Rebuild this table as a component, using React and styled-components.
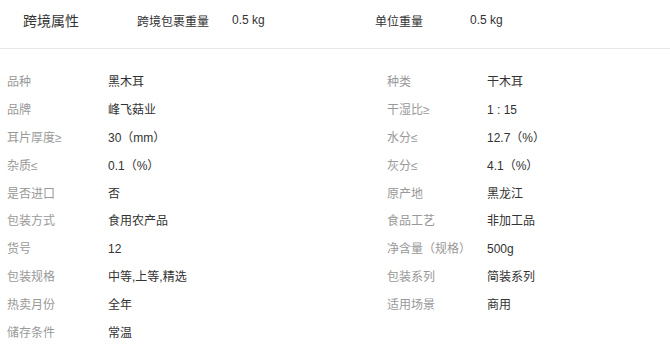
import React from "react";
import styled, { createGlobalStyle } from "styled-components";

const GlobalStyle = createGlobalStyle`
  body {
    margin: 0;
    background: #fff;
    font-family: "Liberation Sans", "Noto Sans CJK SC", sans-serif;
  }
`;

const header = [
  { label: "跨境包裹重量", value: "0.5 kg" },
  { label: "单位重量", value: "0.5 kg" },
];

const rows = [
  ["品种", "黑木耳", "种类", "干木耳"],
  ["品牌", "峰飞菇业", "干湿比≥", "1 : 15"],
  ["耳片厚度≥", "30（mm）", "水分≤", "12.7（%）"],
  ["杂质≤", "0.1（%）", "灰分≤", "4.1（%）"],
  ["是否进口", "否", "原产地", "黑龙江"],
  ["包装方式", "食用农产品", "食品工艺", "非加工品"],
  ["货号", "12", "净含量（规格）", "500g"],
  ["包装规格", "中等,上等,精选", "包装系列", "简装系列"],
  ["热卖月份", "全年", "适用场景", "商用"],
  ["储存条件", "常温"],
];

const Page = styled.div`
  width: 670px;
  height: 346px;
  overflow: hidden;
`;

const Header = styled.div`
  box-sizing: border-box;
  display: flex;
  align-items: center;
  height: 49px;
  padding: 0 0 8px 23px;
  border-bottom: 1px solid #e8e8e8;
`;

const Title = styled.div`
  width: 114px;
  font-size: 14px;
  color: #333;
`;

const HeadLabel = styled.div`
  width: 95px;
  font-size: 12px;
  color: #333;
`;

const HeadValue = styled.div`
  width: 143px;
  font-size: 12px;
  color: #333;
`;

const Table = styled.div`
  display: grid;
  grid-template-columns: 101px 279px 100px 1fr;
  grid-auto-rows: 27.8px;
  align-items: center;
  padding: 19.5px 0 0 7px;
`;

const Cell = styled.div`
  font-size: 12px;
  line-height: 18px;
  color: ${(p) => (p.$label ? "#999" : "#333")};
  white-space: nowrap;
`;

export default function App() {
  return (
    <Page>
      <GlobalStyle />
      <Header>
        <Title>跨境属性</Title>
        {header.map((h) => (
          <React.Fragment key={h.label}>
            <HeadLabel>{h.label}</HeadLabel>
            <HeadValue>{h.value}</HeadValue>
          </React.Fragment>
        ))}
      </Header>
      <Table>
        {rows.map((r) =>
          r.map((t, i) => (
            <Cell key={r[0] + i} $label={i % 2 === 0}>
              {t}
            </Cell>
          ))
        )}
      </Table>
    </Page>
  );
}
